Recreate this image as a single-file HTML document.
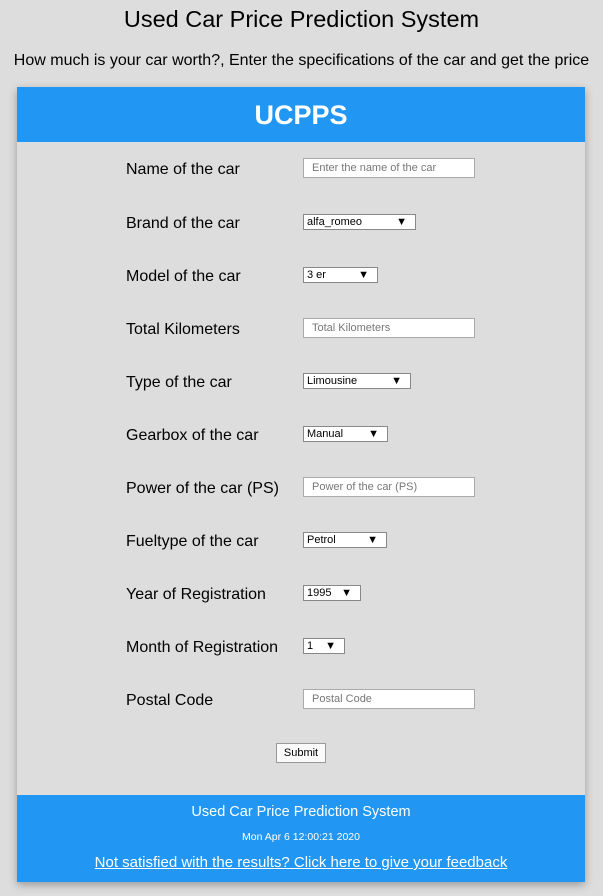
<!DOCTYPE html>
<html><head><style>
body{margin:0;width:603px;height:896px;background:#dddddd;font-family:"Comic Sans MS","Liberation Sans",sans-serif;position:relative;overflow:hidden;color:#000}
.a{position:absolute;white-space:nowrap}
h1{position:absolute;top:6px;left:0;width:603px;text-align:center;margin:0;font-size:23.5px;font-weight:normal}
.sub{top:52px;left:0;width:603px;text-align:center;font-size:16px}
.card{position:absolute;left:17px;top:87px;width:568px;height:795px;box-shadow:0 3px 8px rgba(0,0,0,.3);background:#ddd}
.hd{position:absolute;left:17px;top:87px;width:568px;height:55px;background:#2196F3;color:#fff;font-size:27px;font-weight:bold;text-align:center;line-height:57px}
.ft{position:absolute;left:17px;top:795px;width:568px;height:87px;background:#2196F3;color:#fff;text-align:center}
.lb{left:126px;font-size:16px}
.in{left:303px;height:18px;border:1px solid #aaa;background:#fff;font-size:11px;color:#777;padding-left:8px;line-height:18px;box-sizing:content-box}
.sel{left:303px;height:14px;border:1px solid #888;background:#fff;font-size:11px;line-height:14px;padding-left:3px}
.sel b{position:absolute;right:8px;top:0;font-size:11px}
</style></head><body>
<h1>Used Car Price Prediction System</h1>
<div class="a sub">How much is your car worth?, Enter the specifications of the car and get the price</div>
<div class="card"></div>
<div class="hd">UCPPS</div>
<div class="a lb" style="top:161px">Name of the car</div>
<div class="a in" style="top:158px;width:162px">Enter the name of the car</div>
<div class="a lb" style="top:215px">Brand of the car</div>
<div class="a sel" style="top:214px;width:108px">alfa_romeo<b>▼</b></div>
<div class="a lb" style="top:268px">Model of the car</div>
<div class="a sel" style="top:267px;width:70px">3 er<b>▼</b></div>
<div class="a lb" style="top:321px">Total Kilometers</div>
<div class="a in" style="top:318px;width:162px">Total Kilometers</div>
<div class="a lb" style="top:374px">Type of the car</div>
<div class="a sel" style="top:373px;width:103px">Limousine<b>▼</b></div>
<div class="a lb" style="top:427px">Gearbox of the car</div>
<div class="a sel" style="top:426px;width:80px">Manual<b>▼</b></div>
<div class="a lb" style="top:480px">Power of the car (PS)</div>
<div class="a in" style="top:477px;width:162px">Power of the car (PS)</div>
<div class="a lb" style="top:533px">Fueltype of the car</div>
<div class="a sel" style="top:532px;width:79px">Petrol<b>▼</b></div>
<div class="a lb" style="top:586px">Year of Registration</div>
<div class="a sel" style="top:585px;width:53px">1995<b>▼</b></div>
<div class="a lb" style="top:639px">Month of Registration</div>
<div class="a sel" style="top:638px;width:37px">1<b>▼</b></div>
<div class="a lb" style="top:692px">Postal Code</div>
<div class="a in" style="top:689px;width:162px">Postal Code</div>
<div class="a" style="left:276px;top:743px;width:48px;height:18px;border:1px solid #999;background:#fafafa;font-size:11px;text-align:center;line-height:18px">Submit</div>
<div class="ft">
<div style="position:absolute;top:9px;width:100%;font-size:14.5px">Used Car Price Prediction System</div>
<div style="position:absolute;top:36px;width:100%;font-size:10.5px">Mon Apr 6 12:00:21 2020</div>
<div style="position:absolute;top:59px;width:100%;font-size:15px;text-decoration:underline">Not satisfied with the results? Click here to give your feedback</div>
</div>
</body></html>
